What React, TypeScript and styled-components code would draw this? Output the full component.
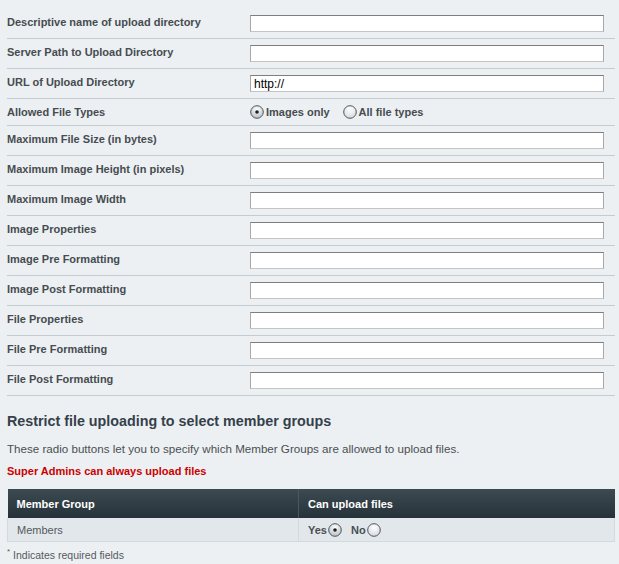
import styled, { createGlobalStyle } from 'styled-components';

const GlobalStyle = createGlobalStyle`
  body {
    margin: 0;
    background: #ecf0f3;
    font-family: 'Liberation Sans', Arial, sans-serif;
  }
`;

type Field = { label: string; value?: string; kind?: 'radio' };

const fields: Field[] = [
  { label: 'Descriptive name of upload directory' },
  { label: 'Server Path to Upload Directory' },
  { label: 'URL of Upload Directory', value: 'http://' },
  { label: 'Allowed File Types', kind: 'radio' },
  { label: 'Maximum File Size (in bytes)' },
  { label: 'Maximum Image Height (in pixels)' },
  { label: 'Maximum Image Width' },
  { label: 'Image Properties' },
  { label: 'Image Pre Formatting' },
  { label: 'Image Post Formatting' },
  { label: 'File Properties' },
  { label: 'File Pre Formatting' },
  { label: 'File Post Formatting' },
];

function Radio({ checked }: { checked?: boolean }) {
  const id = checked ? 'rgOn' : 'rgOff';
  return (
    <RadioDot viewBox="0 0 14 14">
      <defs>
        <radialGradient id={id} cx="50%" cy="30%" r="70%">
          <stop offset="0%" stopColor="#ffffff" />
          <stop offset="100%" stopColor={checked ? '#b9bfc4' : '#d6dadd'} />
        </radialGradient>
      </defs>
      <circle cx="7" cy="7" r="6.3" fill={`url(#${id})`} stroke="#50565a" strokeWidth="1" />
      {checked && <circle cx="7" cy="7" r="1.8" fill="#1c1f22" />}
    </RadioDot>
  );
}

export default function App() {
  return (
    <>
      <GlobalStyle />
      <Page>
        <FieldList>
          {fields.map((f) => (
            <FieldRow key={f.label} $short={f.kind === 'radio'}>
              <Label>{f.label}</Label>
              {f.kind === 'radio' ? (
                <RadioGroup>
                  <RadioOption>
                    <Radio checked />
                    Images only
                  </RadioOption>
                  <RadioOption>
                    <Radio />
                    All file types
                  </RadioOption>
                </RadioGroup>
              ) : (
                <TextInput defaultValue={f.value ?? ''} />
              )}
            </FieldRow>
          ))}
        </FieldList>

        <SectionTitle>Restrict file uploading to select member groups</SectionTitle>
        <Description>These radio buttons let you to specify which Member Groups are allowed to upload files.</Description>
        <Notice>Super Admins can always upload files</Notice>

        <Table>
          <thead>
            <tr>
              <HeadCell $width={291}>Member Group</HeadCell>
              <HeadCell>Can upload files</HeadCell>
            </tr>
          </thead>
          <tbody>
            <tr>
              <BodyCell>Members</BodyCell>
              <BodyCell>
                <Choice>
                  Yes <Radio checked />
                </Choice>
                <Choice>
                  No <Radio />
                </Choice>
              </BodyCell>
            </tr>
          </tbody>
        </Table>
        <Footnote>
          <sup>*</sup> Indicates required fields
        </Footnote>
      </Page>
    </>
  );
}

const Page = styled.div`
  padding: 9px 4px 10px 7px;
`;

const FieldList = styled.div`
  display: flex;
  flex-direction: column;
`;

const FieldRow = styled.div<{ $short: boolean }>`
  display: grid;
  grid-template-columns: 243px 354px;
  align-items: start;
  width: 608px;
  padding-top: 6px;
  height: ${({ $short }) => ($short ? '20px' : '23px')};
  border-bottom: 1px solid #c3ccd0;
`;

const Label = styled.div`
  font-size: 11px;
  font-weight: bold;
  color: #464c50;
  line-height: 14px;
`;

const TextInput = styled.input`
  box-sizing: border-box;
  width: 354px;
  height: 17px;
  margin: 0;
  padding: 0 3px;
  border: 1px solid #c4c4c4;
  border-top-color: #7e7e7e;
  border-left-color: #a8a8a8;
  border-right-color: #a8a8a8;
  background: #fff;
  font-family: 'Liberation Sans', Arial, sans-serif;
  font-size: 12px;
  color: #000;
  outline: none;
`;

const RadioGroup = styled.div`
  display: flex;
  gap: 13px;
  align-items: center;
  height: 14px;
`;

const RadioOption = styled.label`
  display: flex;
  align-items: center;
  gap: 2px;
  font-size: 11px;
  font-weight: bold;
  color: #464c50;
`;

const RadioDot = styled.svg`
  width: 14px;
  height: 14px;
  display: block;
`;

const SectionTitle = styled.h2`
  margin: 16px 0 0;
  font-size: 14.3px;
  font-weight: bold;
  color: #34404a;
  line-height: 18px;
`;

const Description = styled.p`
  margin: 12px 0 0;
  font-size: 11.6px;
  color: #4a4f52;
  line-height: 13px;
`;

const Notice = styled.p`
  margin: 10px 0 0;
  font-size: 11px;
  font-weight: bold;
  color: #cc0000;
  line-height: 13px;
`;

const Table = styled.table`
  margin-top: 11px;
  width: 608px;
  border-collapse: collapse;
  table-layout: fixed;
`;

const HeadCell = styled.th<{ $width?: number }>`
  box-sizing: border-box;
  width: ${({ $width }) => ($width ? `${$width}px` : 'auto')};
  height: 29px;
  padding: 0 9px;
  text-align: left;
  font-size: 11px;
  font-weight: bold;
  color: #fff;
  background: linear-gradient(#3c4a51, #26323a);
  border-left: 1px solid #4a575e;
  &:first-child {
    border-left: none;
  }
`;

const BodyCell = styled.td`
  height: 23px;
  padding: 0 9px;
  font-size: 11px;
  color: #555a5e;
  background: #e1e7ea;
  border: 1px solid #d2dadd;
  border-top: none;
`;

const Choice = styled.span`
  display: inline-flex;
  align-items: center;
  gap: 1px;
  margin-right: 9px;
  vertical-align: middle;
  font-weight: bold;
  color: #4a4f52;
`;

const Footnote = styled.div`
  margin-top: 5px;
  font-size: 10.5px;
  color: #555a5e;

  sup {
    font-size: 8px;
  }
`;
